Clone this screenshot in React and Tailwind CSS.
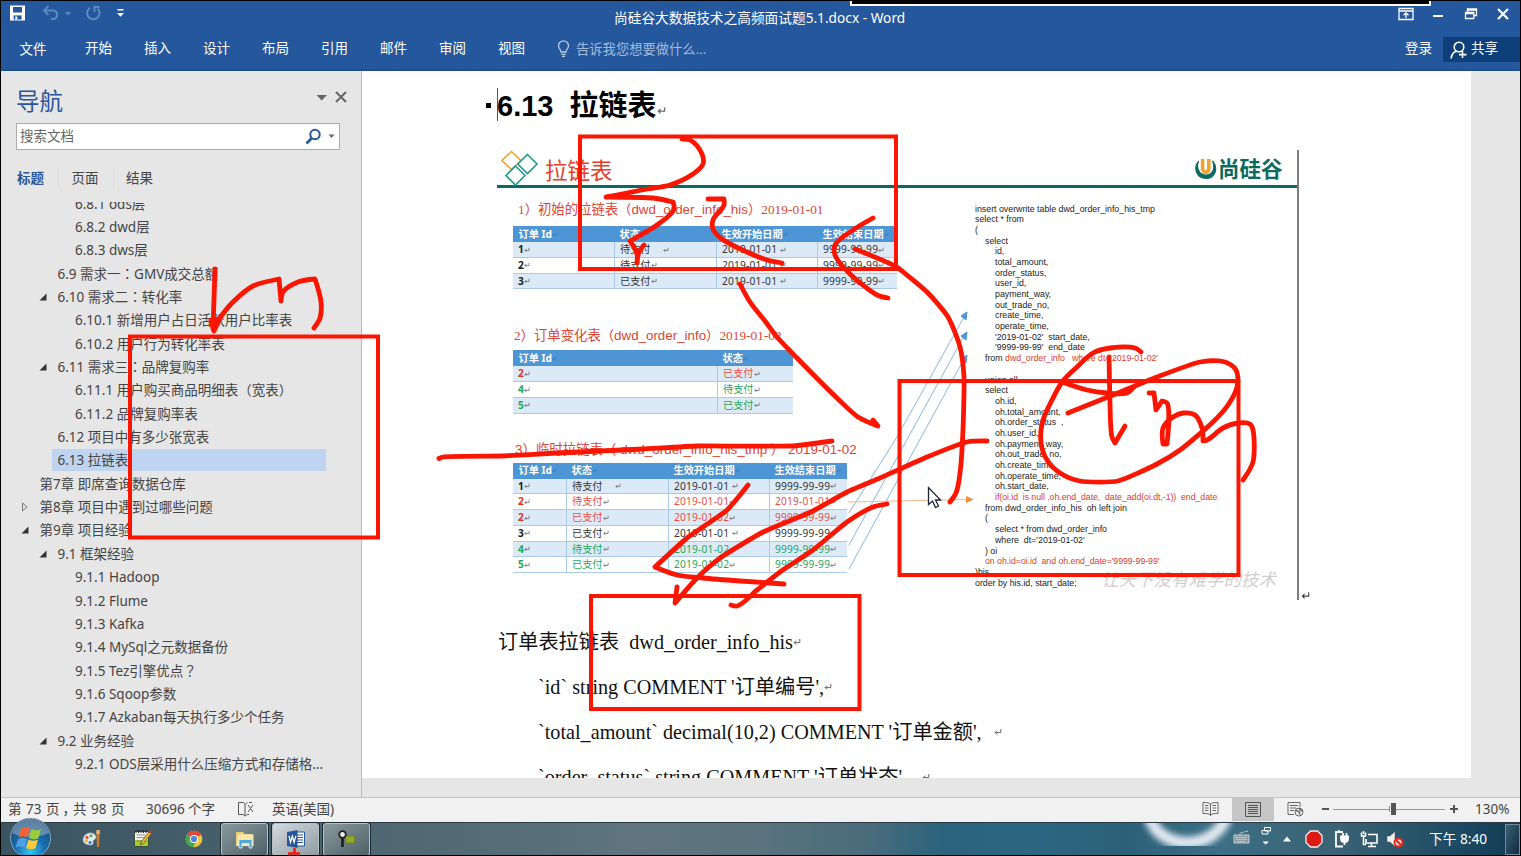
import React from 'react';

const UI = "font-['Noto_Sans','Noto_Sans_CJK_SC',sans-serif]";

function Ret({ className = '' }) {
  return (
    <svg viewBox="0 0 8 8" className={'inline-block shrink-0 ' + className} fill="none" stroke="currentColor" strokeWidth="1">
      <path d="M6.8 1v3.6H1.2M3.2 2.6l-2 2 2 2" />
    </svg>
  );
}

/* Full-width colon and question mark are set centred in their cells */
function Centred({ text }) {
  return text.split(/([：？])/).map((s, i) =>
    i % 2 ? <span key={i} className="font-['Noto_Sans_CJK_TC',sans-serif] leading-none">{s}</span> : s
  );
}

/* ---------- Title bar and ribbon ---------- */

function TitleBar() {
  return (
    <div className="flex h-[32px] items-start text-white">
      <div className="flex w-[613px] items-center pl-[8px] pt-[3px]">
        <svg width="17" height="18" viewBox="0 0 17 18">
          <path d="M1 1.5h15v15H1z" fill="#fff" />
          <path d="M4 3h9v5.5H4z" fill="#24579b" />
          <path d="M4.6 11.4h8V15.500h-8z" fill="#24579b" />
          <path d="M6.300 12.500h2v3h-2z" fill="#fff" />
        </svg>
        <svg className="ml-[16px]" width="18" height="16" viewBox="0 0 18 16" fill="none" stroke="#5f88bf" strokeWidth="2">
          <path d="M6.500 1 2 5.500l4.500 4.500M2.500 5.500h8c3 0 4.500 2 4.500 4.300S13.500 14 10.500 14H9" />
        </svg>
        <svg className="ml-[4px]" width="8" height="5" viewBox="0 0 8 5"><path d="M1 1h6L4 4.500z" fill="#5f88bf" /></svg>
        <svg className="ml-[13px]" width="17" height="17" viewBox="0 0 17 17" fill="none" stroke="#5f88bf" strokeWidth="2">
          <path d="M5 2.800A6.200 6.200 0 1 0 12.500 3.500M9.500 7V2h5" />
        </svg>
        <svg className="ml-[14px]" width="9" height="9" viewBox="0 0 9 9" fill="#fff"><path d="M1.500 0h6v1.500h-6zM1 4h7L4.500 7.800z" /></svg>
      </div>
      <div className="w-[330px] whitespace-nowrap pt-[7px] text-[13.700px] leading-[20px]">尚硅谷大数据技术之高频面试题5.1.docx - Word</div>
      <div className="flex grow items-center justify-end pr-[11px] pt-[6px]">
        <svg width="16" height="14" viewBox="0 0 16 14" fill="none" stroke="#fff" strokeWidth="1.300">
          <path d="M1 1.500h14v11H1zM1 4h14M8 11V6M5.500 8.200 8 5.800l2.500 2.400" />
        </svg>
        <svg className="ml-[19px]" width="11" height="14" viewBox="0 0 11 14"><path d="M0 8h10v2H0z" fill="#fff" /></svg>
        <svg className="ml-[20px]" width="14" height="14" viewBox="0 0 14 14" fill="none" stroke="#fff" strokeWidth="1.300">
          <path d="M3.500 5V2h9v6.500h-2.500M3 3h10M1.500 5.500h8.300v6H1.500zM1.500 6.500h8" />
        </svg>
        <svg className="ml-[19px]" width="12" height="14" viewBox="0 0 12 14" stroke="#fff" strokeWidth="2.200"><path d="M1 2l10 10M11 2 1 12" /></svg>
      </div>
    </div>
  );
}

const TABS = ['开始', '插入', '设计', '布局', '引用', '邮件', '审阅', '视图'];

function Ribbon() {
  return (
    <div className="flex h-[38px] items-start border-b-2 border-[#1f4e8c] text-[13.500px] leading-[26px] text-white">
      <div className="w-[84px] pl-[18.500px] pt-[3px]">文件</div>
      {TABS.map((t) => <div key={t} className="w-[59px] pt-[2px]">{t}</div>)}
      <svg className="mt-[7px]" width="13" height="18" viewBox="0 0 13 18" fill="none" stroke="#b9cce6" strokeWidth="1.300">
        <path d="M4 12c0-2.500-2.500-3.300-2.500-6.200a5 5 0 0 1 10 0C11.500 8.700 9 9.500 9 12zM4.300 14.300h4.400M5 16.300h3" />
      </svg>
      <div className="w-[835px] pl-[6px] pt-[3px] text-[13.300px] text-[#a3bbdb]">告诉我您想要做什么...</div>
      <div className="w-[38px] shrink-0 pt-[2px]">登录</div>
      <div className="mt-[4px] flex h-[25px] grow items-center bg-[#0f3f78] pl-[7px]">
        <svg className="shrink-0" width="18" height="20" viewBox="0 0 18 20" fill="none" stroke="#fff" strokeWidth="1.600">
          <circle cx="9" cy="7" r="4.800" /><path d="M1.200 18.500c.3-4 2.300-6.500 5.300-7.300M12.500 11v7M9 14.600h7.500" />
        </svg>
        <span className="ml-[3px] -mt-[3px] whitespace-nowrap">共享</span>
      </div>
    </div>
  );
}

/* ---------- Navigation pane ---------- */

const OUTLINE = [
  [3, '', '6.8.1 ods层'], [3, '', '6.8.2 dwd层'], [3, '', '6.8.3 dws层'],
  [2, '', '6.9 需求一：GMV成交总额'], [2, 'open', '6.10 需求二：转化率'],
  [3, '', '6.10.1 新增用户占日活跃用户比率表'], [3, '', '6.10.2 用户行为转化率表'],
  [2, 'open', '6.11 需求三：品牌复购率'], [3, '', '6.11.1 用户购买商品明细表（宽表）'],
  [3, '', '6.11.2 品牌复购率表'], [2, '', '6.12 项目中有多少张宽表'], [2, 'sel', '6.13 拉链表'],
  [1, '', '第7章 即席查询数据仓库'], [1, 'closed', '第8章 项目中遇到过哪些问题'], [1, 'open', '第9章 项目经验'],
  [2, 'open', '9.1 框架经验'], [3, '', '9.1.1 Hadoop'], [3, '', '9.1.2 Flume'], [3, '', '9.1.3 Kafka'],
  [3, '', '9.1.4 MySql之元数据备份'], [3, '', '9.1.5 Tez引擎优点？'], [3, '', '9.1.6 Sqoop参数'],
  [3, '', '9.1.7 Azkaban每天执行多少个任务'], [2, 'open', '9.2 业务经验'], [3, '', '9.2.1 ODS层采用什么压缩方式和存储格...'],
];
const INDENT = { 1: 'pl-[20px]', 2: 'pl-[38px]', 3: 'pl-[55.500px]' };

function OutlineRow({ level, state, text }) {
  return (
    <div className={'flex h-[23.350px] shrink-0 items-center whitespace-nowrap ' + INDENT[level]}>
      <span className="flex w-[12px] shrink-0 items-center">
        {state === 'open' && <svg width="8" height="8" viewBox="0 0 8 8"><path d="M7.500.5v7h-7z" fill="#333" /></svg>}
        {state === 'closed' && <svg width="7" height="10" viewBox="0 0 7 10"><path d="M1.500 1v8l4.500-4z" fill="none" stroke="#777" /></svg>}
      </span>
      <span className={'ml-px block h-[22px] pl-[5.500px] ' + (state === 'sel' ? 'w-[274px] bg-[#bfd4f1]' : '')}><Centred text={text} /></span>
    </div>
  );
}

function NavPane() {
  return (
    <div className="flex w-[361px] shrink-0 flex-col border-r border-[#bdbdbd] bg-[#e6e6e6] text-[#444]">
      <div className="flex h-[52px] items-start pl-[15px] pt-[14px]">
        <div className="w-[300px] text-[23.500px] leading-[32px] text-[#2a5699]">导航</div>
        <svg className="mt-[9px]" width="12" height="7" viewBox="0 0 12 7"><path d="M.5 1h10.500L5.700 6.500z" fill="#666" /></svg>
        <svg className="ml-[7px] mt-[6px]" width="12" height="12" viewBox="0 0 12 12" stroke="#666" strokeWidth="2"><path d="M1 1l10 10M11 1 1 11" /></svg>
      </div>
      <div className="ml-[15px] flex h-[27px] w-[324px] items-center border border-[#ababab] bg-white pl-[3px] text-[13.500px] text-[#666]">
        <span className="grow">搜索文档</span>
        <svg width="17" height="17" viewBox="0 0 17 17" fill="none" stroke="#2a5699"><circle cx="10" cy="6.500" r="4.700" strokeWidth="2" /><path d="M6.800 10 1.500 15.500" strokeWidth="2.600" /></svg>
        <svg className="ml-[6px] mr-[4px]" width="7" height="5" viewBox="0 0 7 5"><path d="M.5.5h6l-3 3.500z" fill="#666" /></svg>
      </div>
      <div className="mt-[16px] flex h-[24px] items-center pl-[16px] text-[13.500px]">
        <span className="w-[41px] font-bold text-[#2a5699]">标题</span>
        <span className="h-[20px] w-[13.500px] border-l border-[#dcdcdc]" />
        <span className="w-[41px]">页面</span>
        <span className="h-[20px] w-[13.500px] border-l border-[#dcdcdc]" />
        <span>结果</span>
      </div>
      <div className="mt-[12px] flex h-[576px] flex-col overflow-hidden text-[13.500px] leading-[22px]">
        <div className="-mt-[10px] flex flex-col">
          {OUTLINE.map(([l, s, t]) => <OutlineRow key={t} level={l} state={s} text={t} />)}
        </div>
      </div>
    </div>
  );
}

/* ---------- Slide inside the document ---------- */

const COLOR = { k: 'text-[#333]', r: 'text-[#e8503f]', g: 'text-[#1ea75c]' };
const COLORB = { k: 'text-[#222]', r: 'text-[#dd3325]', g: 'text-[#1ea75c]' };

function OrderTable({ cols, head, rows }) {
  return (
    <div className="text-[10.200px] leading-[15px]">
      <div className={'grid h-[16px] items-center bg-[#4e95d5] font-bold text-white ' + cols}>
        {head.map((h) => <div key={h} className="flex items-center whitespace-nowrap pl-[5.500px]">{h}<Ret className="h-[5px] w-[5px] text-[#3474b4]" /></div>)}
      </div>
      {rows.map((r, i) => (
        <div key={i} className={'grid h-[15.750px] border-b border-[#a9cbe9] ' + cols + (i % 2 ? ' bg-white' : ' bg-[#dce9f6]')}>
          {r.cells.map((c, j) => (
            <div key={j} className={'flex items-center whitespace-nowrap pl-[5px] ' + (j ? 'border-l border-[#a9cbe9] ' + COLOR[r.c] : 'font-bold ' + COLORB[r.c]) + (j > 1 ? ' tracking-[0.200px]' : '')}>
              {c.trimEnd()}
              <Ret className={'h-[6px] w-[6px] text-[#666]' + (c.endsWith('  ') ? ' ml-[12px]' : c.endsWith(' ') ? ' ml-[3px]' : '')} />
            </div>
          ))}
        </div>
      ))}
    </div>
  );
}

const FULL_HEAD = ['订单 Id', '状态', '生效开始日期', '生效结束日期'];
const T1 = [
  { c: 'k', cells: ['1', '待支付  ', '2019-01-01 ', '9999-99-99'] },
  { c: 'k', cells: ['2', '待支付', '2019-01-01 ', '9999-99-99'] },
  { c: 'k', cells: ['3', '已支付', '2019-01-01 ', '9999-99-99'] },
];
const T2 = [
  { c: 'r', cells: ['2', '已支付'] }, { c: 'g', cells: ['4', '待支付'] }, { c: 'g', cells: ['5', '已支付'] },
];
const T3 = [
  { c: 'k', cells: ['1', '待支付  ', '2019-01-01 ', '9999-99-99'] },
  { c: 'r', cells: ['2', '待支付', '2019-01-01', '2019-01-01'] },
  { c: 'r', cells: ['2', '已支付', '2019-01-02', '9999-99-99'] },
  { c: 'k', cells: ['3', '已支付', '2019-01-01 ', '9999-99-99'] },
  { c: 'g', cells: ['4', '待支付', '2019-01-02', '9999-99-99'] },
  { c: 'g', cells: ['5', '已支付', '2019-01-02', '9999-99-99'] },
];

const SQL = [
  [0, 'insert overwrite table dwd_order_info_his_tmp'], [0, 'select * from'], [0, '('], [1, 'select'],
  [2, 'id,'], [2, 'total_amount,'], [2, 'order_status,'], [2, 'user_id,'], [2, 'payment_way,'], [2, 'out_trade_no,'],
  [2, 'create_time,'], [2, 'operate_time,'], [2, "'2019-01-02'  start_date,"], [2, "'9999-99-99'  end_date"],
  [1, 'from ', "dwd_order_info   where dt='2019-01-02'"], [0, ' '], [1, 'union all'], [1, 'select'],
  [2, 'oh.id,'], [2, 'oh.total_amount,'], [2, 'oh.order_status  ,'], [2, 'oh.user_id,'], [2, 'oh.payment_way,'],
  [2, 'oh.out_trade_no,'], [2, 'oh.create_time,'], [2, 'oh.operate_time,'], [2, 'oh.start_date,'],
  [2, '', 'if(oi.id  is null ,oh.end_date,  date_add(oi.dt,-1))  end_date'], [1, 'from dwd_order_info_his  oh left join'],
  [1, '('], [2, 'select * from dwd_order_info'], [2, "where  dt='2019-01-02'"], [1, ') oi'],
  [1, '', "on oh.id=oi.id  and oh.end_date='9999-99-99'"], [0, ')his'], [0, 'order by his.id, start_date;'],
];
const SQL_PAD = { 0: 'pl-0', 1: 'pl-[10px]', 2: 'pl-[20px]' };

function Slide() {
  return (
    <div className="relative h-[450px] w-[802px] border-r-2 border-[#7d7d7d]">
      <div className="flex h-[38px] items-start border-b-[3px] border-[#0b6a60]">
        <svg className="ml-[3px]" width="40" height="37" viewBox="0 0 40 37" fill="none" strokeWidth="1.600">
          <path d="M11.500 1.500 21 10.500l-9.500 9L1.800 10.500z" stroke="#eea236" />
          <path d="M27.500 4.500 37 14l-9.500 9.500-9.700-9.500z" stroke="#1f9a90" fill="#fff" />
          <path d="M15.500 16 25 25.500 15.500 35 6 25.500z" stroke="#1f9a90" fill="#fff" />
        </svg>
        <div className="ml-[5px] w-[649px] pt-[6px] text-[22.500px] leading-[30px] text-[#e2402c]">拉链表</div>
        <svg className="mt-[7px]" width="24" height="24" viewBox="0 0 24 24" fill="none">
          <path d="M4.500 4C-1.500 12 3.500 21.300 12 21.300S25 12 18.500 4C22 12 18 18.200 12 18.200S1.500 12 4.500 4z" fill="#0b6a60" stroke="#0b6a60" strokeWidth="1.200" />
          <path d="M8.600 2v9.500c0 5 6.200 5 6.200 0V2" stroke="#f2a02e" strokeWidth="3.600" />
        </svg>
        <div className="pt-[4px] font-['Noto_Sans_CJK_SC',sans-serif] text-[21.500px] font-bold leading-[28px] text-[#0b6a60]">尚硅谷</div>
      </div>
      <div className="flex">
        <div className="w-[478px] pl-[16px]">
          <div className="flex h-[38px] items-center whitespace-nowrap pl-[5px] pt-[7px] font-['Liberation_Serif','Noto_Sans_CJK_SC',serif] text-[13.350px] text-[#dc4433]">
            1）初始的拉链表（<span className="font-['Liberation_Sans',sans-serif]">dwd_order_info_his</span>）2019-01-01
          </div>
          <div className="w-[384px]"><OrderTable cols="grid-cols-[101px_102px_101px_80px]" head={FULL_HEAD} rows={T1} /></div>
          <div className="flex h-[61px] items-center whitespace-nowrap pl-[1px] pt-[33px] font-['Liberation_Serif','Noto_Sans_CJK_SC',serif] text-[13.350px] text-[#dc4433]">
            2）订单变化表（<span className="font-['Liberation_Sans',sans-serif]">dwd_order_info</span>）2019-01-02
          </div>
          <div className="w-[280px]"><OrderTable cols="grid-cols-[204px_76px]" head={['订单 Id', '状态']} rows={T2} /></div>
          <div className="flex h-[49px] items-center whitespace-pre pl-[2px] pt-[25px] font-['Liberation_Sans','Noto_Sans_CJK_SC',sans-serif] text-[13.430px] text-[#dc4433]">
            3）临时拉链表（ dwd_order_info_his_tmp ） 2019-01-02
          </div>
          <div className="w-[334px]"><OrderTable cols="grid-cols-[53px_102px_101px_78px]" head={FULL_HEAD} rows={T3} /></div>
        </div>
        <div className="flex flex-col pt-[15.500px] font-['Liberation_Sans',sans-serif] text-[8.800px] leading-[10.700px] text-[#222]">
          {SQL.map(([d, a, b], i) => (
            <div key={i} className={'h-[10.700px] whitespace-pre ' + SQL_PAD[d]}>
              {a}{b && <span className="tracking-[-0.060px] text-[#e03c2b]">{b}</span>}
            </div>
          ))}
        </div>
      </div>
      <div className="absolute left-[604px] top-[419px] whitespace-nowrap font-['Noto_Sans_CJK_SC',sans-serif] text-[17.500px] italic leading-[20px] text-[#cfcfcf]">让天下没有难学的技术</div>
    </div>
  );
}

function DocLine({ children, className = '' }) {
  return <div className={'flex h-[45px] shrink-0 items-center whitespace-pre ' + className}>{children}</div>;
}

function Document() {
  return (
    <div className="flex grow flex-col bg-[#e6e6e6]">
      <div className="flex h-[707px] w-[1109px] flex-col overflow-hidden bg-white pl-[124px]">
        <div className="flex h-[79px] shrink-0 items-start pt-[17px] text-black">
          <span className="mt-[15px] h-[5px] w-[5px] bg-black" />
          <span className="ml-[6px] h-[33px] w-px bg-[#555]" />
          <span className="-ml-px whitespace-pre font-['Liberation_Sans','Noto_Sans_CJK_SC',sans-serif] text-[29px] font-bold leading-[36px]">6.13  拉链表</span>
          <Ret className="mt-[18px] h-[9px] w-[9px] text-[#666]" />
        </div>
        <div className="flex shrink-0 items-end pl-[11px]">
          <Slide />
          <Ret className="ml-[2px] h-[9px] w-[9px] text-[#444]" />
        </div>
        <div className="flex flex-col pl-[12px] pt-[19px] font-['Liberation_Serif','Noto_Sans_CJK_SC',serif] text-[20.200px] leading-[30px] text-[#111]">
          <DocLine>订单表拉链表  dwd_order_info_his<Ret className="h-[8px] w-[8px] text-[#666]" /></DocLine>
          <DocLine className="pl-[40px]">`id` string COMMENT '订单编号',<Ret className="h-[8px] w-[8px] text-[#666]" /></DocLine>
          <DocLine className="pl-[40px]">`total_amount` decimal(10,2) COMMENT '订单金额',<Ret className="ml-[12px] h-[8px] w-[8px] text-[#666]" /></DocLine>
          <DocLine className="pl-[40px]">`order_status` string COMMENT '订单状态',<Ret className="ml-[15px] h-[8px] w-[8px] text-[#666]" /></DocLine>
        </div>
      </div>
    </div>
  );
}

/* ---------- Status bar ---------- */

function StatusBar() {
  return (
    <div className="flex h-[25px] items-center border-t border-[#c3c3c3] bg-[#f1f1f1] pb-[2px] text-[13.500px] leading-[22px] text-[#444]">
      <div className="w-[137px] whitespace-nowrap pl-[7px] [word-spacing:1px]">第 73 页<span className="pl-[3px] tracking-[-3px]">，</span>共 98 页</div>
      <div className="ml-[8px] w-[91px] whitespace-nowrap">30696 个字</div>
      <svg className="shrink-0" width="18" height="16" viewBox="0 0 18 16" fill="none" stroke="#555"><path d="M6.500 1.500H1.500v12h4.500l2 1.500V3zM8.500 3 10.500 1.500M8.500 15l2-1.500h1.500M11 4l5 7M16 4l-5 7M12 1.500h3" /></svg>
      <div className="ml-[17px] grow">英语(美国)</div>
      <svg width="17" height="16" viewBox="0 0 17 16" fill="none" stroke="#666"><path d="M8.500 3C6.500 1.500 4 1.500 1 1.500v11c3 0 5.500 0 7.500 1.500 2-1.500 4.500-1.500 7.500-1.500v-11c-3 0-5.500 0-7.500 1.500zM8.500 3v12M3 4.500h3.500M3 7h3.500M3 9.500h3.500M10.500 4.500H14M10.500 7H14M10.500 9.500H14" /></svg>
      <div className="ml-[13px] flex h-[23px] w-[42px] items-center justify-center bg-[#c6c6c6]">
        <svg width="16" height="15" viewBox="0 0 16 15" fill="none" stroke="#555"><path d="M.5.500h15v14H.5zM3 3.500h10M3 5.500h10M3 7.500h10M3 9.500h10M3 11.500h10" /></svg>
      </div>
      <svg className="ml-[13px]" width="17" height="16" viewBox="0 0 17 16" fill="none" stroke="#666"><path d="M7 13.500H1V1.500h12V6M3 4.500h8M3 7h6M3 9.500h4" /><circle cx="12" cy="11" r="4" fill="#f1f1f1" /><path d="M9 9.500l3 1 1 3M12 7l1 2 2.500 1" strokeWidth="1.500" /></svg>
      <span className="ml-[18px] h-[2px] w-[7px] bg-[#555]" />
      <div className="ml-[4px] flex h-[14px] w-[112px] items-center">
        <span className="h-px w-[56px] bg-[#999]" />
        <span className="h-[6px] w-px bg-[#888]" />
        <span className="ml-px h-[12px] w-[5px] bg-[#555]" />
        <span className="h-px grow bg-[#999]" />
      </div>
      <svg className="ml-[4px]" width="10" height="10" viewBox="0 0 10 10"><path d="M4 1h2v3h3v2H6v3H4V6H1V4h3z" fill="#555" /></svg>
      <div className="ml-[16px] w-[45px]">130%</div>
    </div>
  );
}

/* ---------- Taskbar ---------- */

function TaskButton({ active, children }) {
  return (
    <div className={'mr-[4px] flex h-[33px] w-[47px] items-center justify-center rounded-[3px] border border-[#b5c1c6] shadow-[0_0_0_1px_#1c2c34] ' + (active ? 'bg-gradient-to-br from-[#d5dade] to-[#8f9ca3]' : 'bg-gradient-to-br from-[#8b999f] to-[#506169]')}>
      {children}
    </div>
  );
}

function Taskbar() {
  return (
    <div className="relative flex h-[33px] items-center overflow-visible border-t border-[#2b3a44] bg-[linear-gradient(90deg,#3a5460_0%,#4a636d_20%,#526b75_30%,#60757d_42%,#5a737d_50%,#4a6c7b_57%,#2b637d_62%,#2c6680_68%,#2c6078_74%,#3c6f86_80%,#3a6273_88%,#1c4a63_96%,#123a52_100%)]">
      <svg className="absolute left-[1130px] top-0" width="389" height="32" viewBox="0 0 389 32">
        <defs><filter id="haze"><feGaussianBlur stdDeviation="3" /></filter></defs>
        <path d="M18-8c8 36 66 38 78 0" fill="none" stroke="#e3eaf2" strokeWidth="12" filter="url(#haze)" />
        <path d="M110 2h230" stroke="#7d99a6" strokeWidth="9" filter="url(#haze)" opacity=".6" />
      </svg>
      <svg className="relative -mt-[3px] ml-[8px] shrink-0" width="43" height="40" viewBox="0 0 43 40">
        <defs><radialGradient id="orb" cx=".5" cy=".85" r=".8"><stop offset="0" stopColor="#34c6f4" /><stop offset=".45" stopColor="#1b6fb0" /><stop offset="1" stopColor="#1d4670" /></radialGradient></defs>
        <circle cx="21.500" cy="20" r="20" fill="url(#orb)" stroke="#7fa5bf" />
        <path d="M3 15A19 19 0 0 1 40 15C30 20 13 20 3 15z" fill="#fff" opacity=".3" />
        <path d="M12 11c3-2.500 6-2 9-.5l-2.500 9c-3-1.500-6-1.500-9 .3z" fill="#ef6431" />
        <path d="M22.500 11c3 1.500 6 2 9.500 0l-2.500 9c-3.500 1.800-6 1.500-9.500 0z" fill="#9bcb3c" />
        <path d="M9 21.500c3-2 6-1.800 9-.3l-2.500 8.500c-3-1.500-6-1.500-9 0z" fill="#4f9ee0" />
        <path d="M19.500 21.500c3.500 1.600 6 1.600 9.500 0l-2.500 8.500c-3 1.800-6 1.500-9.500 0z" fill="#fbcb35" />
      </svg>
      <svg className="relative ml-[30px]" width="20" height="20" viewBox="0 0 20 20">
        <path d="M1 11c0-5 5-8 9-7 5 1 5 6 2 7-2 1 1 5-3 5-5 0-8-2-8-5z" fill="#dfe9f0" stroke="#7d98aa" strokeWidth=".6" />
        <circle cx="5" cy="8.500" r="1.700" fill="#e2553a" /><circle cx="9" cy="6.800" r="1.500" fill="#52a852" /><circle cx="4.500" cy="12" r="1.500" fill="#e7b636" /><circle cx="8" cy="13.500" r="1.500" fill="#3476c8" />
        <path d="M14.500 2h3v7l-.5 9h-2l-.5-9z" fill="#c97a33" /><path d="M14.300 1h3.500v4h-3.500z" fill="#e2b173" />
      </svg>
      <svg className="relative ml-[31px]" width="20" height="20" viewBox="0 0 20 20">
        <path d="M1.500 2.500h14v15h-14z" fill="#f5f7ee" stroke="#3c4c3a" /><path d="M2 11h13v6H2z" fill="#9fd12f" /><path d="M3.500 6h9M3.500 8.500h9M3.500 12h9" stroke="#777" strokeWidth=".8" /><path d="M3 1v3M5.500 1v3M8 1v3M10.500 1v3M13 1v3" stroke="#222" />
        <path d="M8 13l8-10 2.500 1.500-8 10-3 1.500z" fill="#e9b53a" stroke="#5c4418" strokeWidth=".7" /><path d="M16 3l1.500-2 2.500 1.500-1.500 2z" fill="#bb3a2a" />
      </svg>
      <svg className="relative ml-[32px]" width="18" height="18" viewBox="0 0 18 18">
        <circle cx="9" cy="9" r="8.300" fill="#f4c53a" /><path d="M9 9 1.800 4.800A8.300 8.300 0 0 1 16.200 4.800z" fill="#dd4b3c" /><path d="M9 9 1.800 4.800A8.300 8.300 0 0 0 8 17.300l4-7z" fill="#46a552" /><circle cx="9" cy="9" r="4" fill="#fff" /><circle cx="9" cy="9" r="3.100" fill="#4a86dc" />
      </svg>
      <div className="relative ml-[18px] flex">
        <TaskButton>
          <svg width="22" height="20" viewBox="0 0 22 20"><path d="M2 3h7l1.500 2H18v12H2z" fill="#e9cf76" /><path d="M4 5.500h15.500V17H3z" fill="#f8e9ab" /><path d="M5 10.500h13V19h-3v-4.500H8V19H5z" fill="#4fa9dd" stroke="#d9f0fc" strokeWidth=".8" /></svg>
        </TaskButton>
        <TaskButton active>
          <svg width="20" height="20" viewBox="0 0 20 20"><path d="M9 3h9.500v14H9z" fill="#fff" stroke="#27569b" /><path d="M11 6h6M11 8.500h6M11 11h6M11 13.500h6" stroke="#27569b" /><path d="M1 3l10.500-2v18L1 17z" fill="#27569b" /><path d="M3 6.800l1.500 6.500 1.800-6 1.800 6L9.800 6.800" fill="none" stroke="#fff" strokeWidth="1.300" /></svg>
        </TaskButton>
        <TaskButton>
          <svg width="18" height="18" viewBox="0 0 18 18"><path d="M7.500 6h9v7h-9z" fill="#93aa2d" stroke="#6c7f25" /><circle cx="4.500" cy="4.500" r="3.300" fill="#eee" stroke="#222" strokeWidth="1.800" /><path d="M4.500 8v9" stroke="#222" strokeWidth="2.800" /></svg>
        </TaskButton>
      </div>
      <div className="relative flex grow items-center justify-end text-white">
        <svg className="-mt-[5px]" width="18" height="15" viewBox="0 0 18 15" fill="#8d9a9f" stroke="#c5ced3"><path d="M1 6h15v8H1z" /><path d="M3 8.500h11M3 10.500h11M4.500 12.500h8M7 5.500V4l8-2" fill="none" strokeDasharray="2 .6" /></svg>
        <svg className="-mt-[5px] ml-[9px]" width="12" height="22" viewBox="0 0 12 22" fill="none" stroke="#fff"><path d="M4.500 1.500h6v3.500h-6zM2 4.500h6v3.500H2z" /><path d="M2.500 15.500h6.500L5.700 18.500z" fill="#fff" stroke="none" /></svg>
        <svg className="ml-[10px]" width="10" height="6" viewBox="0 0 10 6"><path d="M1 5.500h8l-4-5z" fill="#fff" /></svg>
        <svg className="ml-[13px]" width="18" height="18" viewBox="0 0 18 18"><path d="M5.500 1h7L17 5.500v7L12.500 17h-7L1 12.500v-7z" fill="#dc1b12" stroke="#eee" strokeWidth="1.300" /></svg>
        <svg className="ml-[10px]" width="17" height="18" viewBox="0 0 17 18" fill="none" stroke="#fff" strokeWidth="1.800"><path d="M9 3V2H3v14.500h7M5 1h2" /><path d="M8 6.500h7V9c0 2-1 3-3.500 3S8 11 8 9zM10 3v3M13.500 3v3M11.500 12v3" /><path d="M8.500 7.500h6l-1 3h-4z" fill="#fff" /></svg>
        <svg className="ml-[10px]" width="18" height="18" viewBox="0 0 18 18" fill="none" stroke="#fff" strokeWidth="1.600"><path d="M8 4.500h9v8.500H6V9M11.500 13v3M8 16.500h8M1.500 2.500v3.500h4V2.500M3.500 1v3M3.500 6v8.500H6" /></svg>
        <svg className="ml-[8px]" width="18" height="18" viewBox="0 0 18 18"><path d="M1 6h3l5-4.500v15L4 12H1z" fill="#eee" stroke="#555" strokeWidth=".5" /><circle cx="12.500" cy="12.500" r="4" fill="#f5d6d2" stroke="#dc2b1c" strokeWidth="1.900" /><path d="M10 10l5 5" stroke="#dc2b1c" strokeWidth="1.900" /></svg>
        <div className="ml-[25px] w-[60px] whitespace-nowrap text-[13.700px] leading-[20px]">下午 8:40</div>
        <div className="ml-[16px] h-[31px] w-[15px] border border-[#6f8c9a] bg-gradient-to-br from-[#3c6175] to-[#0f2c40]" />
      </div>
    </div>
  );
}

/* ---------- Arrows of the diagram and pen strokes ---------- */

const STROKES = [
  '215 269 213 329 222 315 233 302 253 286 279 279 281 301 283 292 298 282 315 279 321 302 320 318 314 328',
  '211 320 214 331 220 318 213 322',
  '682 139 690 140 702 154 703 164 693 174 670 185 647 189 627 193 606 197 653 198 673 202 674 209 657 225 630 241 637 254 637 263 639 252 644 245',
  '708 199 724 199 724 205 713 220 713 229 722 239 747 252 767 260 782 263',
  '873 218 853 230 835 245 835 255 850 274 877 295 888 298',
  '855 249 897 267 902 271 927 292 948 317 960 347 964 377 963 430 960 473 956 493 950 502',
  '740 284 750 302 765 321 777 337 797 358 837 398 858 417 878 426 873 420',
  '439 458.500 443 457 502 456 557 453 643 449 697 446 793 446 832 441',
  '748 485 727 510 687 538 655 567 677 575 703 578 740 581 784 584',
  '987 441 967 442 927 457 880 478 847 492 813 511 763 532 720 558 697 578 675 603 677 587',
  '887 504 873 507 847 522 813 550 780 572 757 590 737 606 731 605',
  '1141 352 1135 348 1110 348 1093 353 1077 367 1062 382 1043 420 1041 443 1047 460 1060 473 1080 481 1118 481 1157 464 1180 450 1213 422 1228 405 1237 387 1236 370 1225 362 1200 362 1157 377 1113 395 1068 413',
  '1062 382 1087 390 1107 393 1127 393 1134 387',
  '1109 357 1110 403 1112 437 1115 443 1125 426',
  '1149 393 1154 393 1156 410 1162 401 1167 403 1167 444 1163 444 1163 428 1173 417 1183 413 1195 415 1202 428 1203 441 1207 440 1223 428 1238 423 1250 424 1253 430 1253 462 1243 480',
];
const BOXES = [[580, 136.500, 316, 132.500], [130, 336.500, 248, 201], [899.500, 381, 339, 194], [591, 596, 268.500, 113]];

/* Round the gentle bends of a pen stroke and keep its sharp corners */
function inkPath(list) {
  const n = list.split(' ').map(Number);
  const p = [];
  for (let i = 0; i < n.length; i += 2) p.push([n[i], n[i + 1]]);
  const tangent = (i) => {
    if (i === 0 || i === p.length - 1) return [0, 0];
    const a = [p[i][0] - p[i - 1][0], p[i][1] - p[i - 1][1]];
    const b = [p[i + 1][0] - p[i][0], p[i + 1][1] - p[i][1]];
    const la = Math.hypot(...a);
    const lb = Math.hypot(...b);
    if ((a[0] * b[0] + a[1] * b[1]) / (la * lb) < 0.35) return [0, 0];
    const dx = a[0] / la + b[0] / lb;
    const dy = a[1] / la + b[1] / lb;
    const l = Math.hypot(dx, dy);
    return [dx / l, dy / l];
  };
  let d = `M${p[0][0]} ${p[0][1]}`;
  for (let i = 1; i < p.length; i++) {
    const s = Math.min(7, Math.hypot(p[i][0] - p[i - 1][0], p[i][1] - p[i - 1][1]) * 0.3);
    const t0 = tangent(i - 1);
    const t1 = tangent(i);
    d += `C${p[i - 1][0] + t0[0] * s} ${p[i - 1][1] + t0[1] * s} ${p[i][0] - t1[0] * s} ${p[i][1] - t1[1] * s} ${p[i][0]} ${p[i][1]}`;
  }
  return d;
}

function Overlay() {
  return (
    <svg className="pointer-events-none absolute -left-px -top-px" width="1521" height="856" viewBox="0 0 1521 856" fill="none">
      <g stroke="#9dc3e2" strokeWidth="1.100">
        <path d="M849 513 897 437 964 317M849 545 964 336M849 569 964 359" />
        <path d="M848 502 966 499.500" stroke="#efb98a" />
      </g>
      <path d="M967 312l-1 8-5-4zM967 332l-1 8-5-4zM967 355l-1 8-5-4z" fill="#4e95d5" stroke="#4e95d5" />
      <path d="M966 496v7l8-3.500z" fill="#ee8f3e" />
      <g stroke="#fc1602" strokeWidth="4.800" strokeLinecap="round" strokeLinejoin="round">
        {STROKES.map((d) => <path key={d} d={inkPath(d)} />)}
      </g>
      <g stroke="#fc1602" strokeWidth="4">
        {BOXES.map(([x, y, w, h]) => <rect key={x} x={x} y={y} width={w} height={h} />)}
      </g>
      <path d="M288 853.500h12M294.500 848v6" stroke="#fc1602" strokeWidth="2.500" />
      <path d="M928.500 487.500v17l4-3.500 3 6.500 3-1.500-3-6h5z" fill="#fff" stroke="#1b2735" strokeWidth="1.300" />
    </svg>
  );
}

export default function App() {
  return (
    <div className={'relative flex h-[856px] w-[1521px] flex-col overflow-hidden border border-black bg-[#e6e6e6] ' + UI}>
      <div className="flex shrink-0 flex-col bg-[#24579b]">
        <TitleBar />
        <Ribbon />
      </div>
      <div className="flex h-[726px] shrink-0">
        <NavPane />
        <Document />
      </div>
      <StatusBar />
      <Taskbar />
      <Overlay />
      <div className="absolute left-[849px] -top-px h-[6px] w-[581px] border-2 border-t border-white bg-black" />
    </div>
  );
}
